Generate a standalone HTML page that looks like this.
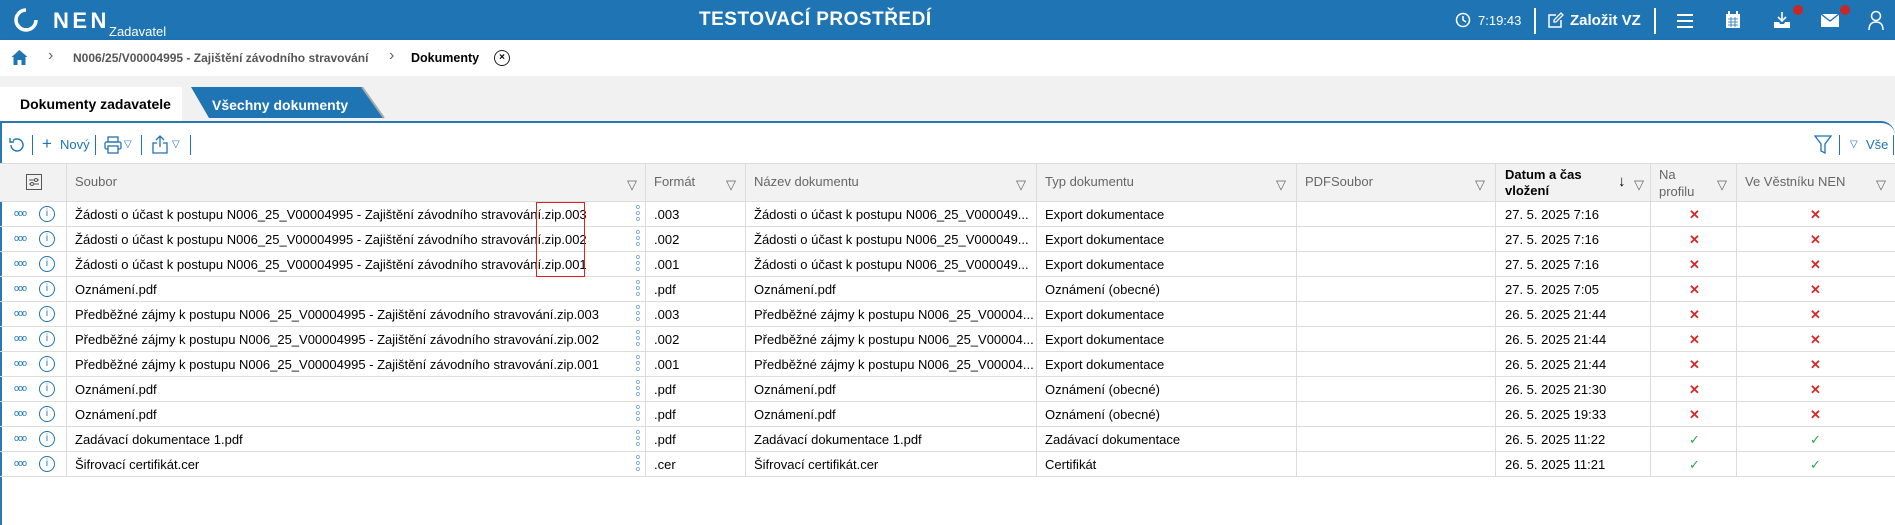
<!DOCTYPE html>
<html><head><meta charset="utf-8"><style>
*{box-sizing:border-box;margin:0;padding:0}
body{width:1895px;height:525px;overflow:hidden;background:#fff;font-family:"Liberation Sans",Arial,sans-serif;position:relative;color:#000}
.abs{position:absolute}
.top{left:0;top:0;width:1895px;height:40px;background:#1f74b4;color:#fff}
.bc{left:0;top:40px;width:1895px;height:36px;background:#fff;box-shadow:0 2px 4px rgba(0,0,0,.12)}
.gray{left:0;top:76px;width:1895px;height:46px;background:#f1f1f1}
.panel{left:0;top:121px;width:1895px;height:404px;border-top:2px solid #2a77b5;border-left:2px solid #2a77b5;border-top-right-radius:14px;background:#fff}
.tri{color:#555;font-size:9px}
.hdr{left:0;top:163px;width:1895px;height:39px;background:#f2f2f2;border-top:1px solid #dcdcdc;border-bottom:1px solid #dcdcdc}
.row{left:0;width:1895px;height:25px;border-bottom:1px solid #dcdcdc;font-size:13px}
.vl{position:absolute;top:163px;width:1px;height:314px;background:#dcdcdc}
.c{position:absolute;top:5px;white-space:nowrap}
.h{position:absolute;font-size:13px;color:#666;white-space:nowrap}
.x{color:#d42a2a;font-weight:bold;font-size:13px}
.ok{color:#2aa34a;font-size:13px}
</style></head><body>
<div class="abs top">
 <svg class="abs" style="left:14px;top:8px" width="24" height="24" viewBox="0 0 24 24"><path d="M12 2a10 10 0 1 0 10 10" fill="none" stroke="#fff" stroke-width="3.5"/><path d="M4 16a9 9 0 0 0 14 3" fill="none" stroke="#fff" stroke-width="2"/></svg>
 <div class="abs" style="left:53px;top:8px;font-size:22px;font-weight:bold;letter-spacing:3.5px">NEN</div>
 <div class="abs" style="left:109px;top:24px;font-size:13px">Zadavatel</div>
 <div class="abs" style="left:699px;top:9px;font-size:19px;font-weight:bold;letter-spacing:.5px">TESTOVACÍ PROSTŘEDÍ</div>
 <svg class="abs" style="left:1455px;top:12px" width="16" height="16" viewBox="0 0 16 16"><circle cx="8" cy="8" r="6.5" fill="none" stroke="#fff" stroke-width="1.5"/><path d="M8 4v4l3 2" fill="none" stroke="#fff" stroke-width="1.5"/></svg>
 <div class="abs" style="left:1478px;top:13px;font-size:13px">7:19:43</div>
 <div class="abs" style="left:1534px;top:8px;width:2px;height:26px;background:#fff"></div>
 <svg class="abs" style="left:1547px;top:12px" width="17" height="17" viewBox="0 0 17 17"><path d="M9 3H2v12h12V8" fill="none" stroke="#fff" stroke-width="1.5"/><path d="M14 1l2 2-7 7H7V8z" fill="none" stroke="#fff" stroke-width="1.3"/></svg>
 <div class="abs" style="left:1570px;top:12px;font-size:15px;font-weight:bold">Založit VZ</div>
 <div class="abs" style="left:1654px;top:8px;width:2px;height:26px;background:#fff"></div>
 <div class="abs" style="left:1677px;top:14px;width:16px;height:2px;background:#fff;box-shadow:0 6px #fff,0 12px #fff"></div>
 <svg class="abs" style="left:1725px;top:11px" width="16" height="18" viewBox="0 0 16 18"><rect x="1" y="3" width="14" height="14" fill="#fff"/><path d="M4 0v4M12 0v4" stroke="#fff" stroke-width="2"/><path d="M3 8h10M3 11h10M3 14h10M6 6v10M10 6v10" stroke="#1f74b4" stroke-width=".8"/></svg>
 <svg class="abs" style="left:1773px;top:11px" width="18" height="18" viewBox="0 0 18 18"><path d="M9 1v9M5 6l4 4 4-4" fill="none" stroke="#fff" stroke-width="1.6"/><path d="M1 11v6h16v-6h-5l-1 2H7l-1-2z" fill="#fff"/></svg>
 <div class="abs" style="left:1793px;top:5px;width:10px;height:10px;border-radius:50%;background:#c62828"></div>
 <svg class="abs" style="left:1821px;top:14px" width="18" height="13" viewBox="0 0 18 13"><rect width="18" height="13" fill="#fff"/><path d="M0 0l9 7 9-7" fill="none" stroke="#1f74b4" stroke-width="1.3"/></svg>
 <div class="abs" style="left:1840px;top:5px;width:10px;height:10px;border-radius:50%;background:#c62828"></div>
 <svg class="abs" style="left:1868px;top:10px" width="16" height="20" viewBox="0 0 16 20"><circle cx="8" cy="6" r="4.5" fill="none" stroke="#fff" stroke-width="1.5"/><path d="M1 20c0-6 3-8 7-8s7 2 7 8" fill="none" stroke="#fff" stroke-width="1.5"/></svg>
</div>
<div class="abs bc">
 <svg class="abs" style="left:11px;top:10px" width="17" height="15" viewBox="0 0 16 15"><path d="M8 0L0 7h2v8h4v-5h4v5h4V7h2z" fill="#1f74b4"/></svg>
 <div class="abs" style="left:48px;top:7px;font-size:16px;color:#666">&#8250;</div>
 <div class="abs" style="left:73px;top:11px;font-size:12px;font-weight:bold;color:#555">N006/25/V00004995 - Zajištění závodního stravování</div>
 <div class="abs" style="left:389px;top:7px;font-size:16px;color:#666">&#8250;</div>
 <div class="abs" style="left:411px;top:11px;font-size:12.5px;font-weight:bold">Dokumenty</div>
 <div class="abs" style="left:494px;top:10px;width:16px;height:16px;border:1.5px solid #222;border-radius:50%;font-size:10px;text-align:center;line-height:13px;font-weight:bold">×</div>
</div>
<div class="abs gray"></div>
<div class="abs" style="left:0;top:87px;width:182px;height:35px;background:#fff"></div>
<svg class="abs" style="left:179px;top:87px" width="220" height="35" viewBox="0 0 220 35"><path d="M12 0H183l22 31H30z" fill="#1f74b4"/><path d="M183 0l22 31" stroke="#aaa" stroke-width="2"/></svg>
<div class="abs" style="left:20px;top:96px;font-size:14px;font-weight:bold">Dokumenty zadavatele</div>
<div class="abs" style="left:212px;top:97px;font-size:14px;font-weight:bold;color:#fff">Všechny dokumenty</div>
<div class="abs panel"></div>
<svg class="abs" style="left:8px;top:136px" width="18" height="18" viewBox="0 0 18 18"><path d="M3 9a6 6 0 1 0 2-4.5" fill="none" stroke="#1f74b4" stroke-width="1.4"/><path d="M2 2v4h4" fill="none" stroke="#1f74b4" stroke-width="1.4"/></svg>
<div class="abs" style="left:32px;top:135px;width:1px;height:20px;background:#1f74b4"></div>
<div class="abs" style="left:42px;top:134px;font-size:17px;color:#1f74b4">+</div>
<div class="abs" style="left:60px;top:137px;font-size:13px;color:#1f74b4">Nový</div>
<div class="abs" style="left:95px;top:135px;width:1px;height:20px;background:#1f74b4"></div>
<svg class="abs" style="left:104px;top:136px" width="18" height="18" viewBox="0 0 18 18"><rect x="1" y="6" width="16" height="7" rx="1.5" fill="none" stroke="#1f74b4" stroke-width="1.3"/><rect x="4" y="1" width="10" height="5" fill="none" stroke="#1f74b4" stroke-width="1.3"/><rect x="4" y="10" width="10" height="7" fill="#fff" stroke="#1f74b4" stroke-width="1.3"/></svg>
<div class="abs" style="left:124px;top:139px;font-size:10px;color:#1f74b4">▽</div>
<div class="abs" style="left:141px;top:135px;width:1px;height:20px;background:#1f74b4"></div>
<svg class="abs" style="left:152px;top:135px" width="16" height="19" viewBox="0 0 16 19"><path d="M8 1v11M4 5l4-4 4 4" fill="none" stroke="#1f74b4" stroke-width="1.3"/><path d="M5 8H1v10h14V8h-4" fill="none" stroke="#1f74b4" stroke-width="1.3"/></svg>
<div class="abs" style="left:172px;top:139px;font-size:10px;color:#1f74b4">▽</div>
<div class="abs" style="left:190px;top:135px;width:1px;height:20px;background:#1f74b4"></div>
<svg class="abs" style="left:1814px;top:135px" width="18" height="19" viewBox="0 0 18 19"><path d="M1 1h16l-6 8v9l-4-2V9z" fill="none" stroke="#1f74b4" stroke-width="1.3"/></svg>
<div class="abs" style="left:1839px;top:135px;width:1px;height:20px;background:#1f74b4"></div>
<div class="abs" style="left:1850px;top:139px;font-size:10px;color:#1f74b4">▽</div>
<div class="abs" style="left:1866px;top:137px;font-size:13px;color:#1f74b4">Vše</div>
<div class="abs" style="left:1893px;top:135px;width:1px;height:20px;background:#1f74b4"></div>
<div class="abs hdr">
 <svg class="abs" style="left:26px;top:10px" width="16" height="16" viewBox="0 0 16 16"><rect x=".5" y=".5" width="15" height="15" fill="none" stroke="#555"/><path d="M3 6h10M3 10h10" stroke="#555"/><circle cx="10" cy="6" r="1.5" fill="#fff" stroke="#555"/><circle cx="6" cy="10" r="1.5" fill="#fff" stroke="#555"/></svg>
 <div class="h" style="left:75px;top:10px">Soubor</div><div class="h tri" style="left:627px;top:13px">▽</div>
 <div class="h" style="left:654px;top:10px">Formát</div><div class="h tri" style="left:726px;top:13px">▽</div>
 <div class="h" style="left:754px;top:10px">Název dokumentu</div><div class="h tri" style="left:1016px;top:13px">▽</div>
 <div class="h" style="left:1045px;top:10px">Typ dokumentu</div><div class="h tri" style="left:1276px;top:13px">▽</div>
 <div class="h" style="left:1305px;top:10px">PDFSoubor</div><div class="h tri" style="left:1475px;top:13px">▽</div>
 <div class="h" style="left:1505px;top:3px;color:#000;font-weight:bold;line-height:16px">Datum a čas<br>vložení</div>
 <div class="h" style="left:1618px;top:9px;color:#000;font-size:15px">↓</div><div class="h tri" style="left:1634px;top:13px">▽</div>
 <div class="h" style="left:1659px;top:2px;line-height:17px">Na<br>profilu</div><div class="h tri" style="left:1717px;top:13px">▽</div>
 <div class="h" style="left:1745px;top:10px">Ve Věstníku NEN</div><div class="h tri" style="left:1876px;top:13px">▽</div>
</div>
<div class="vl" style="left:66px"></div><div class="vl" style="left:645px"></div><div class="vl" style="left:745px"></div><div class="vl" style="left:1036px"></div><div class="vl" style="left:1296px"></div><div class="vl" style="left:1495px"></div><div class="vl" style="left:1650px"></div><div class="vl" style="left:1736px"></div>
<div id="rows"></div>
<script>
var d=[["Žádosti o účast k postupu N006_25_V00004995 - Zajištění závodního stravování.zip.003",".003","Žádosti o účast k postupu N006_25_V000049...","Export dokumentace","27. 5. 2025 7:16",0],
["Žádosti o účast k postupu N006_25_V00004995 - Zajištění závodního stravování.zip.002",".002","Žádosti o účast k postupu N006_25_V000049...","Export dokumentace","27. 5. 2025 7:16",0],
["Žádosti o účast k postupu N006_25_V00004995 - Zajištění závodního stravování.zip.001",".001","Žádosti o účast k postupu N006_25_V000049...","Export dokumentace","27. 5. 2025 7:16",0],
["Oznámení.pdf",".pdf","Oznámení.pdf","Oznámení (obecné)","27. 5. 2025 7:05",0],
["Předběžné zájmy k postupu N006_25_V00004995 - Zajištění závodního stravování.zip.003",".003","Předběžné zájmy k postupu N006_25_V00004...","Export dokumentace","26. 5. 2025 21:44",0],
["Předběžné zájmy k postupu N006_25_V00004995 - Zajištění závodního stravování.zip.002",".002","Předběžné zájmy k postupu N006_25_V00004...","Export dokumentace","26. 5. 2025 21:44",0],
["Předběžné zájmy k postupu N006_25_V00004995 - Zajištění závodního stravování.zip.001",".001","Předběžné zájmy k postupu N006_25_V00004...","Export dokumentace","26. 5. 2025 21:44",0],
["Oznámení.pdf",".pdf","Oznámení.pdf","Oznámení (obecné)","26. 5. 2025 21:30",0],
["Oznámení.pdf",".pdf","Oznámení.pdf","Oznámení (obecné)","26. 5. 2025 19:33",0],
["Zadávací dokumentace 1.pdf",".pdf","Zadávací dokumentace 1.pdf","Zadávací dokumentace","26. 5. 2025 11:22",1],
["Šifrovací certifikát.cer",".cer","Šifrovací certifikát.cer","Certifikát","26. 5. 2025 11:21",1]];
var h="";
d.forEach(function(r,i){var y=202+i*25;var m=r[5]?'<span class="ok">✓</span>':'<span class="x">✕</span>';
h+='<div class="abs row" style="top:'+y+'px">'+
'<div class="c" style="left:14px;top:6px;color:#1f74b4;font-size:9px;letter-spacing:-1px">ooo</div>'+
'<div class="c" style="left:39px;top:4px;width:16px;height:16px;border:1.3px solid #1f74b4;border-radius:50%;color:#1f74b4;font-size:10px;text-align:center;line-height:14px">i</div>'+
'<div class="c" style="left:75px">'+r[0]+'</div>'+
'<div class="c" style="left:636px;top:3px;color:#3a7fd0;font-size:7px;line-height:6px">o<br>o<br>o</div>'+
'<div class="c" style="left:654px">'+r[1]+'</div>'+
'<div class="c" style="left:754px">'+r[2]+'</div>'+
'<div class="c" style="left:1045px">'+r[3]+'</div>'+
'<div class="c" style="left:1505px">'+r[4]+'</div>'+
'<div class="c" style="left:1689px">'+m+'</div>'+
'<div class="c" style="left:1810px">'+m+'</div></div>';});
document.getElementById("rows").innerHTML=h;
</script>
<div class="abs" style="left:536px;top:202px;width:49px;height:75px;border:1px solid #e02020"></div>
</body></html>
